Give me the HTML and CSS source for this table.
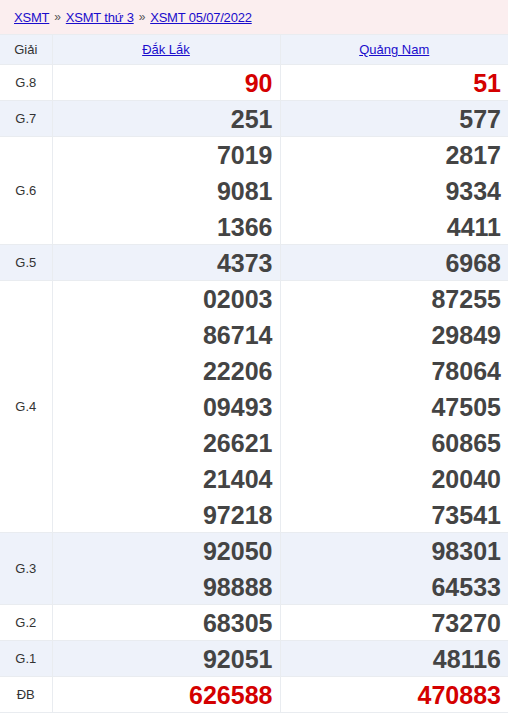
FILE: index.html
```
<!DOCTYPE html>
<html lang="vi">
<head>
<meta charset="utf-8">
<link rel="stylesheet" href="styles.css">
</head>
<body>
<div class="crumbs">
  <a href="#">XSMT</a><span class="sep">»</span><a href="#">XSMT thứ 3</a><span class="sep">»</span><a href="#">XSMT 05/07/2022</a>
</div>
<table class="kq">
  <thead>
    <tr><th class="lbl">Giải</th><th><a href="#">Đắk Lắk</a></th><th><a href="#">Quảng Nam</a></th></tr>
  </thead>
  <tbody>
    <tr><td class="lbl">G.8</td><td><div class="n red">90</div></td><td><div class="n red">51</div></td></tr>
    <tr class="alt"><td class="lbl">G.7</td><td><div class="n">251</div></td><td><div class="n">577</div></td></tr>
    <tr><td class="lbl">G.6</td><td><div class="n">7019</div><div class="n">9081</div><div class="n">1366</div></td><td><div class="n">2817</div><div class="n">9334</div><div class="n">4411</div></td></tr>
    <tr class="alt"><td class="lbl">G.5</td><td><div class="n">4373</div></td><td><div class="n">6968</div></td></tr>
    <tr><td class="lbl">G.4</td><td><div class="n">02003</div><div class="n">86714</div><div class="n">22206</div><div class="n">09493</div><div class="n">26621</div><div class="n">21404</div><div class="n">97218</div></td><td><div class="n">87255</div><div class="n">29849</div><div class="n">78064</div><div class="n">47505</div><div class="n">60865</div><div class="n">20040</div><div class="n">73541</div></td></tr>
    <tr class="alt"><td class="lbl">G.3</td><td><div class="n">92050</div><div class="n">98888</div></td><td><div class="n">98301</div><div class="n">64533</div></td></tr>
    <tr><td class="lbl">G.2</td><td><div class="n">68305</div></td><td><div class="n">73270</div></td></tr>
    <tr class="alt"><td class="lbl">G.1</td><td><div class="n">92051</div></td><td><div class="n">48116</div></td></tr>
    <tr><td class="lbl">ĐB</td><td><div class="n red">626588</div></td><td><div class="n red">470883</div></td></tr>
  </tbody>
</table>
</body>
</html>
```
FILE: styles.css
```
* { box-sizing: border-box; }
body {
  margin: 0;
  font-family: "Liberation Sans", Arial, sans-serif;
  color: #333;
  background: #fff;
}
.crumbs {
  background: #fbeeef;
  height: 34px;
  padding: 0 0 0 14px;
  display: flex;
  align-items: center;
  font-size: 13px;
  letter-spacing: -0.2px;
}
.crumbs a { color: #1a0dcc; }
.crumbs .sep { color: #555; margin: 0 5px; font-size: 12px; }
.kq {
  width: 100%;
  border-collapse: collapse;
  table-layout: fixed;
}
.kq th, .kq td {
  border: 1px solid #e9ecf0;
  padding: 0;
}
.kq tr > :first-child { border-left: 0; }
.kq tr > :last-child { border-right: 0; }
.kq th {
  background: #eef2fa;
  height: 30px;
  font-size: 13px;
  font-weight: normal;
  text-align: center;
}
.kq th a { color: #1a0dcc; }
.kq th.lbl, .kq td.lbl { width: 52px; }
.kq td.lbl {
  font-size: 13px;
  text-align: center;
  color: #333;
}
.kq tr.alt td { background: #eef2fa; }
.kq td .n {
  height: 36px;
  line-height: 37px;
  text-align: right;
  padding-right: 7px;
  font-size: 25px;
  font-weight: bold;
  color: #444;
}
.kq td .n:last-child { height: 35px; }
.kq td .n.red { color: #d40000; }
```
